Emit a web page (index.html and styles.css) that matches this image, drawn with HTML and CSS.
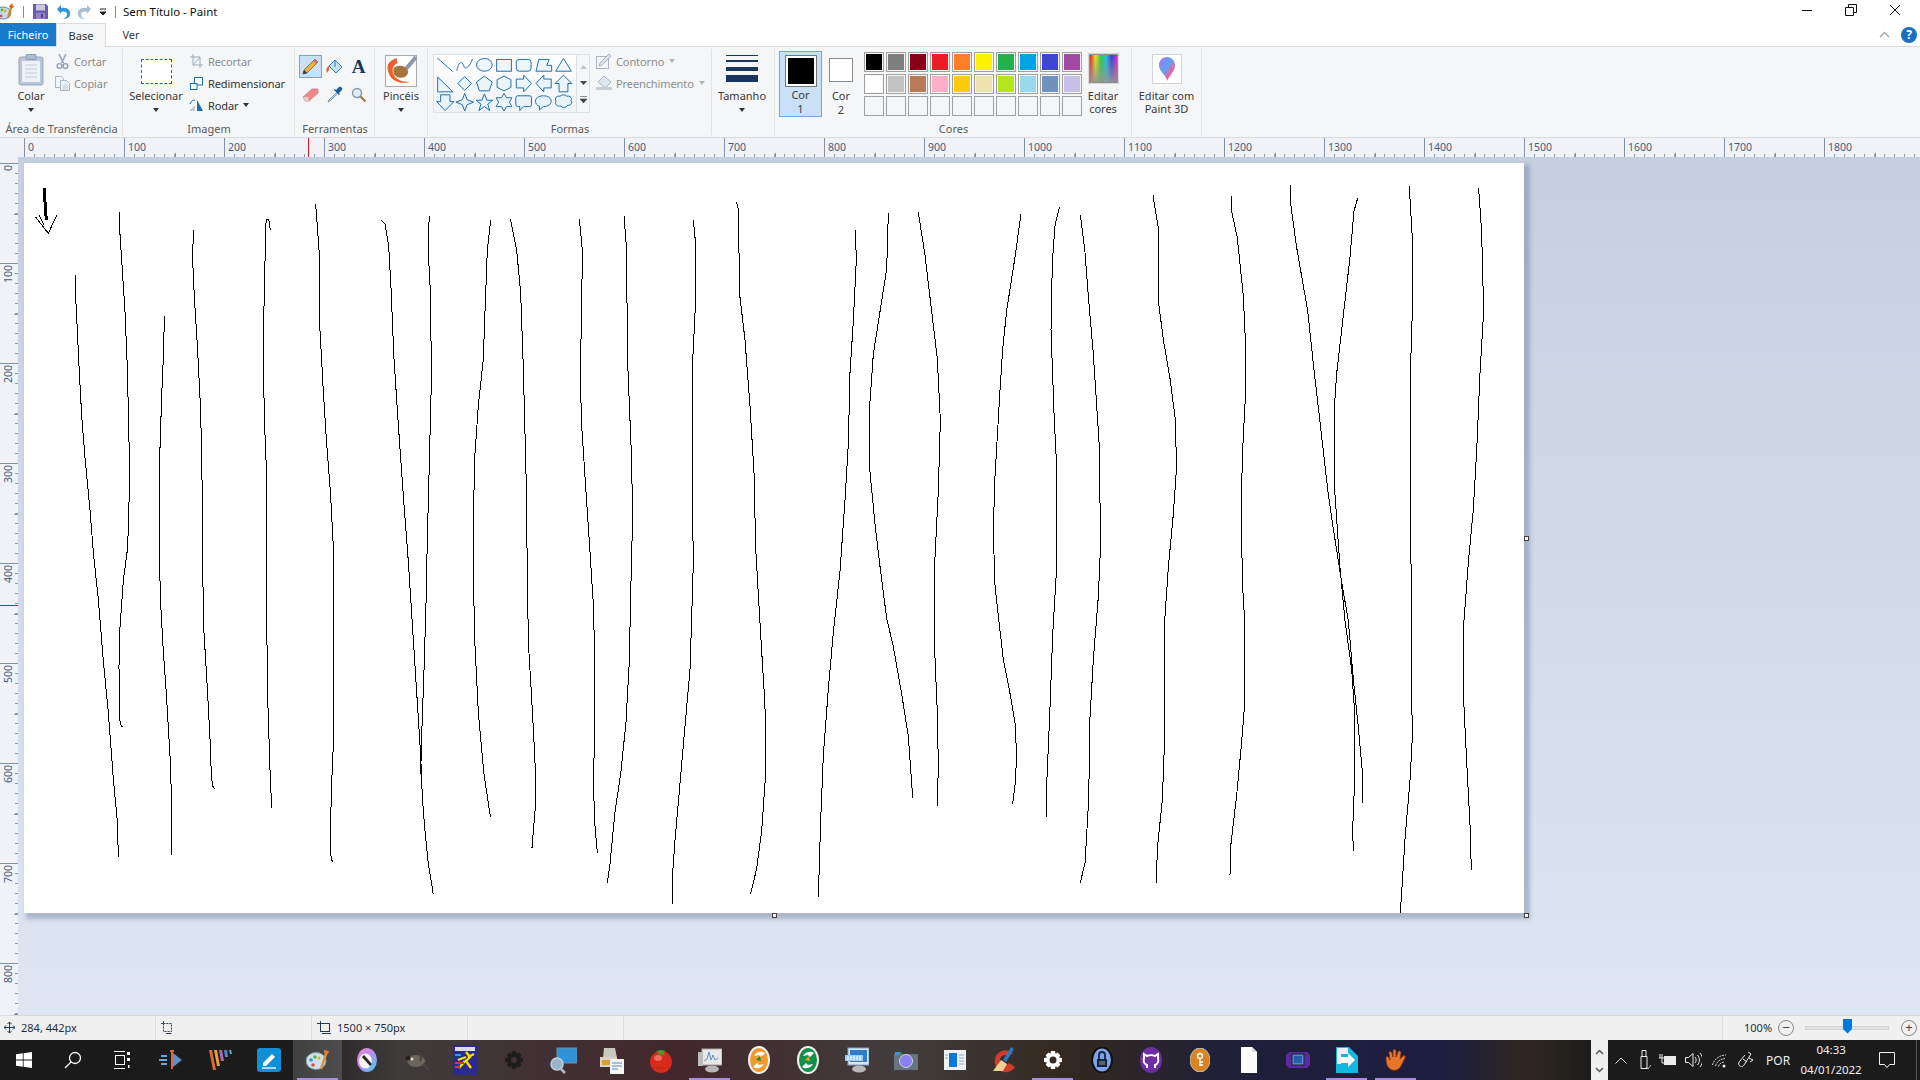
FILE: index.html
```html
<!DOCTYPE html>
<html lang="pt">
<head>
<meta charset="utf-8">
<title>Sem Título - Paint</title>
<link rel="stylesheet" href="styles.css">
</head>
<body>
<div class="app">
  <header class="titlebar">
    <div class="qat">
      <svg class="qat-app" width="18" height="18" viewBox="0 0 18 18"><ellipse cx="6" cy="10" rx="8" ry="6" fill="#c9dce8" stroke="#6d8796"/><circle cx="2" cy="9" r="1.4" fill="#3c8fd0"/><circle cx="5" cy="7" r="1.4" fill="#5cae4c"/><circle cx="8" cy="8" r="1.4" fill="#d8b030"/><circle cx="4" cy="13" r="1.4" fill="#d05040"/><path d="M15 1 L11 15" stroke="#d08a30" stroke-width="2.4"/><path d="M13 2l4 1-1 2-4-1z" fill="#e05a30"/></svg>
      <span class="qat-sep"></span>
      <svg class="qat-save" width="15" height="15" viewBox="0 0 15 15"><path d="M0 0h13l2 2v13H0z" fill="#6a5bb0"/><rect x="3" y="0.5" width="9" height="6" fill="#c9c8e0"/><rect x="3" y="9" width="9" height="6" fill="#8e88c4"/><rect x="8" y="10" width="2" height="4" fill="#4a3f90"/></svg>
      <svg class="qat-undo" width="15" height="16" viewBox="0 0 15 16"><path d="M1 5 L5 1 L5 4 C12 3 15 7 14 11 C13 14 10 15 7 15 C10 14 11 12 11 10 C11 8 8 7 5 8 L5 10 Z" fill="#2f96dc"/></svg>
      <svg class="qat-redo" width="15" height="16" viewBox="0 0 15 16"><path d="M14 5 L10 1 L10 4 C3 3 0 7 1 11 C2 14 5 15 8 15 C5 14 4 12 4 10 C4 8 7 7 10 8 L10 10 Z" fill="#a9c0d2"/></svg>
      <svg class="qat-more" width="8" height="8" viewBox="0 0 8 8"><path d="M1 1h6M1 4h6l-3 3z" stroke="#222" fill="#222"/></svg>
      <span class="qat-sep qat-sep-end"></span>
      <span class="doc-title">Sem Título - Paint</span>
    </div>
    <div class="winctl">
      <svg width="12" height="12" viewBox="0 0 12 12"><path d="M1 6.5h10" stroke="#111"/></svg>
      <svg width="12" height="12" viewBox="0 0 12 12"><path d="M3.5 3V.5h8v8H9M.5 3.5h8v8h-8z" fill="none" stroke="#111"/></svg>
      <svg width="12" height="12" viewBox="0 0 12 12"><path d="M1 1l10 10M11 1L1 11" stroke="#111"/></svg>
    </div>
  </header>

  <nav class="tabs">
    <span class="tab tab-file">Ficheiro</span>
    <span class="tab tab-active">Base</span>
    <span class="tab">Ver</span>
    <span class="tabs-fill"></span>
    <svg class="tabs-chev" width="11" height="7" viewBox="0 0 11 7"><path d="M1 6l4.5-4.5L10 6" fill="none" stroke="#a8a8a8" stroke-width="1.4"/></svg>
    <span class="help">?</span>
  </nav>

  <section class="ribbon">
    <div class="group g-clip">
      <div class="group-body">
        <div class="big big-colar">
          <div class="big-icon">
            <svg width="26" height="32" viewBox="0 0 26 32"><rect x="1" y="3" width="24" height="28" rx="2" fill="#b9c6da" stroke="#97a7bf"/><rect x="4" y="7" width="18" height="21" fill="#eef2f8"/><path d="M7 11h12M7 15h12M7 19h12M7 23h12" stroke="#c5cedc"/><rect x="8" y="0.5" width="10" height="5" rx="1" fill="#aebbd0" stroke="#8d9db8"/></svg>
          </div>
          <span class="big-text">Colar</span>
          <span class="caret"></span>
        </div>
        <div class="small-col">
          <div class="small off"><svg width="13" height="15" viewBox="0 0 13 15"><path d="M3 0l4.500 9M10 0L5.500 9" stroke="#9aa7b8" stroke-width="1.600" fill="none"/><circle cx="3.500" cy="12" r="2.400" fill="none" stroke="#8f9db0" stroke-width="1.400"/><circle cx="9.500" cy="12" r="2.400" fill="none" stroke="#8f9db0" stroke-width="1.400"/></svg><span>Cortar</span></div>
          <div class="small off"><svg width="15" height="15" viewBox="0 0 15 15"><path d="M.5.5h6l2 2v9h-8z" fill="#f2f5f9" stroke="#a9b4c4"/><path d="M5.500 4.500h6l3 3v7h-9z" fill="#f2f5f9" stroke="#a9b4c4"/><path d="M7 9h6M7 11h6M7 13h6" stroke="#c3ccd8"/></svg><span>Copiar</span></div>
        </div>
      </div>
      <div class="group-label">Área de Transferência</div>
    </div>

    <div class="group g-image">
      <div class="group-body">
        <div class="big big-select">
          <div class="big-icon"><span class="marquee"></span></div>
          <span class="big-text">Selecionar</span>
          <span class="caret"></span>
        </div>
        <div class="small-col">
          <div class="small off"><svg width="13" height="14" viewBox="0 0 13 14"><path d="M3 0v11h10M0 3h10v11" fill="none" stroke="#9aa8bc"/><path d="M3 11L10 3" stroke="#9aa8bc"/></svg><span>Recortar</span></div>
          <div class="small"><svg width="13" height="13" viewBox="0 0 13 13"><rect x="4.500" y=".5" width="8" height="7.500" fill="#fff" stroke="#1e6eb4"/><rect x=".5" y="6.500" width="6.500" height="6" fill="#fff" stroke="#1e6eb4"/></svg><span>Redimensionar</span></div>
          <div class="small"><svg width="15" height="13" viewBox="0 0 15 13"><path d="M8 12V1l6 11z" fill="#1e6eb4"/><path d="M6 12H0l6-6z" fill="#c4ccd6"/><path d="M1 5C2 2 4 1 6 1" fill="none" stroke="#1e6eb4"/></svg><span>Rodar</span><span class="caret caret-inline"></span></div>
        </div>
      </div>
      <div class="group-label">Imagem</div>
    </div>

    <div class="group g-tools">
      <div class="group-body">
        <div class="tools">
          <span class="tool tool-on"><svg width="17" height="17" viewBox="0 0 17 17"><path d="M13 1l3 3L5 15l-4 1 1-4z" fill="#e9b43c" stroke="#75613a" stroke-width=".8"/><path d="M13 1l3 3-2 2-3-3z" fill="#d9746a"/><path d="M1 16l1-4 3 3z" fill="#333"/></svg></span>
          <span class="tool"><svg width="18" height="18" viewBox="0 0 18 18"><path d="M9 2l7 7-6 6-7-7z" fill="#c9dff0" stroke="#2d78b8"/><path d="M9 2v7" stroke="#2d78b8"/><path d="M3 8C0 9 0 13 1 15L3 12z" fill="#e8632a"/></svg></span>
          <span class="tool tool-a">A</span>
          <span class="tool"><svg width="17" height="14" viewBox="0 0 17 14"><path d="M1 9l9-8h6v4l-9 8H3z" fill="#ee8a8e" stroke="#cf6e72" stroke-width=".7"/><path d="M1 9l5 0 1 4H3z" fill="#d9d0d0"/></svg></span>
          <span class="tool"><svg width="16" height="17" viewBox="0 0 16 17"><path d="M10 6l-8 8-1 2 2-1 8-8z" fill="#cfe1f0" stroke="#5b7f9f" stroke-width=".8"/><path d="M9 4l3-3c2-1 4 1 3 3l-3 3 1 1-1 1-5-5 1-1z" fill="#1e5ea5"/></svg></span>
          <span class="tool"><svg width="16" height="16" viewBox="0 0 16 16"><circle cx="6" cy="6" r="4.500" fill="#dcecf7" stroke="#8a96a5" stroke-width="1.400"/><path d="M9.500 9.500l5 5" stroke="#a07b4a" stroke-width="2.200"/></svg></span>
        </div>
      </div>
      <div class="group-label">Ferramentas</div>
    </div>

    <div class="group g-brush">
      <div class="group-body">
        <div class="big big-brush">
          <div class="big-icon big-icon-top">
            <svg class="brush-svg" width="32" height="32" viewBox="0 0 32 32"><rect x=".5" y=".5" width="31" height="31" fill="#fff" stroke="#a9a9a9"/><path d="M31 2L20 15" stroke="#8d99a8" stroke-width="4"/><path d="M10 12c6-3 13 0 13 5s-7 7-11 5-5-8-2-10z" fill="#a8743e"/><path d="M12 3C5 5 1 9 3 16c2 9 11 14 22 11-9 0-15-3-17-9-1-4 0-8 5-10 0 0-2-3-1-5z" fill="#e8632a"/></svg>
          </div>
          <span class="big-text">Pincéis</span>
          <span class="caret"></span>
        </div>
      </div>
      <div class="group-label">&nbsp;</div>
    </div>

    <div class="group g-shapes">
      <div class="group-body">
        <div class="gallery">
          <svg class="gallery-svg" width="142" height="58" viewBox="0 0 142 58">
            <g class="shape-stroke">
              <path class="no-fill" d="M2 3L18 17"/>
              <path class="no-fill" d="M22 16C24 5 28 7 29 11S34 14 38 4"/>
              <ellipse cx="50" cy="10" rx="8" ry="6.500"/>
              <rect x="62.500" y="4.500" width="15" height="12"/>
              <rect x="82.500" y="4.500" width="15" height="12" rx="3"/>
              <path d="M102.500 16.500L105.500 4.500H116L113.500 10.500H118.500V16.500Z"/>
              <path d="M130.500 3.500L122.500 16.500H138.500Z"/>
              <path d="M2.500 22.500V37.500H18Z"/>
              <path d="M30 22L37 29 30 36 23 29Z"/>
              <path d="M50 21.500L58 27.500 55 36.500H45L42 27.500Z"/>
              <path d="M70 21.500L77 25V33L70 36.500 63 33V25Z"/>
              <path d="M82.500 24.500H90V20.500L98 29 90 37.500V33.500H82.500Z"/>
              <path d="M118 24.500H110.500V20.500L102.500 29 110.500 37.500V33.500H118Z"/>
              <path d="M130.500 20.500L139 29H135V37.500H126V29H122Z"/>
              <path d="M5.500 40.500H15V47.500H19L10 56.500 1.500 47.500H5.500Z"/>
              <path d="M30 39L32.500 45.500 39 48 32.500 50.500 30 57 27.500 50.500 21 48 27.500 45.500Z"/>
              <path d="M50 39.500L52.500 46H58.500L53.500 50 55.500 56.500 50 52.500 44.500 56.500 46.500 50 41.500 46H47.500Z"/>
              <path d="M70 39L72.500 43.500H78L75.500 48 78 52.500H72.500L70 57 67.500 52.500H62L64.500 48 62 43.500H67.500Z"/>
              <path d="M84 41.500H96Q98 41.500 98 43.500V50Q98 52.500 96 52.500H90L86 56.500V52.500H84Q82 52.500 82 50V43.500Q82 41.500 84 41.500Z"/>
              <path d="M110 41.500C115 41.500 118 44 118 47S115 52.500 110 52.500L106 56V52C103 51 102 49 102 47 102 44 105 41.500 110 41.500Z"/>
              <path d="M127 42C129 40 132 40 134 42 137 41 140 44 138 46 140 48 138 52 135 51 133 54 129 54 128 52 124 53 121 50 123 47 121 44 124 41 127 42Z"/>
            </g>
          </svg>
          <div class="gallery-scroll">
            <svg width="9" height="6" viewBox="0 0 9 6"><path d="M1 5l3.500-4L8 5z" fill="#c6c6c6"/></svg>
            <svg width="9" height="6" viewBox="0 0 9 6"><path d="M1 1l3.500 4L8 1z" fill="#444"/></svg>
            <svg width="9" height="8" viewBox="0 0 9 8"><path d="M1 .5h7M1 3l3.500 4L8 3z" fill="#444" stroke="#444" stroke-width=".6"/></svg>
          </div>
        </div>
        <div class="small-col small-col-shape">
          <div class="small off"><svg width="16" height="16" viewBox="0 0 16 16"><rect x=".5" y="3.500" width="12" height="12" fill="#f5f6f7" stroke="#a9b4c4"/><path d="M13 1l2 2-9 9-3 1 1-3z" fill="#dde3ea" stroke="#98a4b5" stroke-width=".8"/></svg><span>Contorno</span><span class="caret caret-inline caret-off"></span></div>
          <div class="small off"><svg width="16" height="16" viewBox="0 0 16 16"><path d="M8 1l7 6-6 6-7-6z" fill="#dfe6ee" stroke="#a9b4c4"/><rect y="12" width="16" height="3" fill="#c7ced8"/></svg><span>Preenchimento</span><span class="caret caret-inline caret-off"></span></div>
        </div>
      </div>
      <div class="group-label">Formas</div>
    </div>

    <div class="group g-size">
      <div class="group-body">
        <div class="big big-size">
          <div class="big-icon size-lines"><i class="sz1"></i><i class="sz2"></i><i class="sz3"></i><i class="sz4"></i></div>
          <span class="big-text">Tamanho</span>
          <span class="caret"></span>
        </div>
      </div>
      <div class="group-label">&nbsp;</div>
    </div>

    <div class="group g-colors">
      <div class="group-body">
        <div class="cor cor-on">
          <span class="cor-box"><i class="cor-black"></i></span>
          <span class="cor-text">Cor<br>1</span>
        </div>
        <div class="cor cor-two">
          <span class="cor-box2"></span>
          <span class="cor-text">Cor<br>2</span>
        </div>
        <div class="palette">
          <span class="sw"><i class="c1"></i></span><span class="sw"><i class="c2"></i></span><span class="sw"><i class="c3"></i></span><span class="sw"><i class="c4"></i></span><span class="sw"><i class="c5"></i></span><span class="sw"><i class="c6"></i></span><span class="sw"><i class="c7"></i></span><span class="sw"><i class="c8"></i></span><span class="sw"><i class="c9"></i></span><span class="sw"><i class="c10"></i></span>
          <span class="sw"><i class="c11"></i></span><span class="sw"><i class="c12"></i></span><span class="sw"><i class="c13"></i></span><span class="sw"><i class="c14"></i></span><span class="sw"><i class="c15"></i></span><span class="sw"><i class="c16"></i></span><span class="sw"><i class="c17"></i></span><span class="sw"><i class="c18"></i></span><span class="sw"><i class="c19"></i></span><span class="sw"><i class="c20"></i></span>
          <span class="sw"></span><span class="sw"></span><span class="sw"></span><span class="sw"></span><span class="sw"></span><span class="sw"></span><span class="sw"></span><span class="sw"></span><span class="sw"></span><span class="sw"></span>
        </div>
        <div class="big big-edit">
          <div class="big-icon big-icon-top"><span class="rainbow"></span></div>
          <span class="big-text">Editar<br>cores</span>
        </div>
      </div>
      <div class="group-label">Cores</div>
    </div>

    <div class="group g-3d">
      <div class="group-body">
        <div class="big big-3d">
          <div class="big-icon big-icon-top">
            <span class="p3d-box"><svg width="18" height="26" viewBox="0 0 18 26"><defs><linearGradient id="p3d" x1="0" y1="0" x2="1" y2="1"><stop offset="0" stop-color="#b86bf0"/><stop offset=".45" stop-color="#5aa6f5"/><stop offset=".7" stop-color="#f0609a"/><stop offset="1" stop-color="#f5b020"/></linearGradient></defs><path d="M9 1C14 1 17 5 17 9 17 15 12 19 9 25 9 20 1 16 1 9 1 5 4 1 9 1Z" fill="url(#p3d)"/></svg></span>
          </div>
          <span class="big-text">Editar com<br>Paint 3D</span>
        </div>
      </div>
      <div class="group-label">&nbsp;</div>
    </div>
  </section>

  <div class="ruler-top">
    <span class="rt">0</span><span class="rt">100</span><span class="rt">200</span><span class="rt">300</span><span class="rt">400</span><span class="rt">500</span><span class="rt">600</span><span class="rt">700</span><span class="rt">800</span><span class="rt">900</span><span class="rt">1000</span><span class="rt">1100</span><span class="rt">1200</span><span class="rt">1300</span><span class="rt">1400</span><span class="rt">1500</span><span class="rt">1600</span><span class="rt">1700</span><span class="rt">1800</span>
    <i class="mark-x"></i>
  </div>

  <main class="work-row">
    <div class="ruler-left">
      <span class="rl"><b>0</b></span><span class="rl"><b>100</b></span><span class="rl"><b>200</b></span><span class="rl"><b>300</b></span><span class="rl"><b>400</b></span><span class="rl"><b>500</b></span><span class="rl"><b>600</b></span><span class="rl"><b>700</b></span><span class="rl"><b>800</b></span>
      <i class="mark-y"></i>
    </div>
    <div class="workspace">
      <div class="canvas">
        <svg class="drawing" width="1500" height="750" viewBox="0 0 1500 750">
          <g class="ink">
            <polyline class="thick" points="20,25 22.300,57"/>
            <polyline points="11.300,53.700 24.300,70.300 32.700,52.300"/>
            <polyline points="15.300,52.300 20,62"/>
          </g>
          <g class="ink" transform="translate(16 7) scale(.33333 .47194)">
            <polyline points="107,222 107,270 112,340 118,430 125,520 135,610 150,720 160,810 175,910 190,1040 205,1150 220,1290 232,1380 235,1455"/>
            <polyline points="240,90 238,115 245,190 255,300 262,420 267,570 268,680 263,800 250,870 240,970 237,1050 238,1150 241,1175 247,1180"/>
            <polyline points="373,310 371,380 365,480 360,590 358,680 358,820 362,920 370,1020 380,1120 390,1240 394,1320 394,1452"/>
            <polyline points="460,127 458,190 463,270 472,370 482,510 486,650 488,850 492,980 503,1110 511,1220 514,1285 518,1305 524,1312"/>
            <polyline points="691,127 686,104 680,104 676,120 675,200 671,320 670,430 675,560 680,650 680,960 684,1140 690,1270 695,1352"/>
            <polyline points="827,72 830,100 838,180 840,340 850,470 860,580 872,690 880,800 881,1200 875,1300 871,1400 872,1450 877,1466"/>
            <polyline points="1024,106 1035,115 1046,160 1053,250 1062,400 1075,540 1090,690 1105,830 1125,1050 1142,1240 1147,1330 1155,1400 1165,1470 1180,1535"/>
            <polyline points="1170,97 1165,120 1166,190 1172,270 1174,450 1168,620 1162,780 1158,920 1152,1060 1146,1180 1142,1280"/>
            <polyline points="1352,107 1342,170 1335,300 1330,400 1315,500 1303,620 1300,800 1303,980 1315,1150 1332,1280 1351,1370"/>
            <polyline points="1411,103 1430,170 1442,260 1450,420 1458,640 1462,850 1465,1000 1475,1120 1485,1250 1486,1350 1476,1436"/>
          </g>
          <g class="ink" transform="translate(476 7) scale(.33333 .47194)">
            <polyline points="238,103 247,170 245,300 241,420 244,530 255,650 270,810 280,920 283,1000 283,1220 280,1300 285,1390 292,1447"/>
            <polyline points="372,97 380,170 382,390 390,530 394,600 398,730 392,900 388,1040 378,1170 362,1280 345,1360 330,1470 322,1510"/>
            <polyline points="580,107 586,150 586,290 577,420 577,690 580,830 575,950 570,1060 556,1170 540,1300 525,1420 517,1500 517,1555"/>
            <polyline points="709,67 714,80 720,270 735,360 750,500 762,640 767,800 780,960 792,1100 797,1170 796,1290 785,1400 770,1480 752,1534"/>
            <polyline points="1066,127 1069,190 1060,320 1050,430 1045,580 1035,700 1020,850 1000,980 985,1100 970,1240 962,1380 955,1540"/>
            <polyline points="1165,92 1160,210 1140,300 1120,390 1109,500 1110,640 1125,750 1140,840 1160,950 1180,1010 1205,1110 1225,1200 1238,1330"/>
            <polyline points="1255,90 1275,180 1290,270 1312,400 1321,530 1315,680 1305,820 1303,1000 1312,1150 1315,1260 1312,1347"/>
          </g>
          <g class="ink" transform="translate(976 7) scale(.33333 .48469)">
            <polyline points="63,90 45,180 20,290 8,370 0,455 -16,643 -20,750 -15,857 0,950 10,1010 30,1080 45,1140 50,1210 45,1270 38,1308"/>
            <polyline points="178,77 165,115 157,190 153,330 162,500 169,600 169,830 158,960 150,1110 140,1270 139,1335"/>
            <polyline points="241,92 255,170 265,260 280,380 297,560 302,770 295,880 280,1010 270,1130 266,1300 255,1430 241,1470"/>
            <polyline points="462,52 461,62 475,120 477,280 490,350 510,430 527,520 529,620 520,710 505,820 493,940 493,1190 487,1300 472,1400 469,1472"/>
            <polyline points="696,53 695,85 712,140 730,260 738,380 736,470 727,590 724,700 727,850 734,930 734,1100 725,1180 710,1290 693,1390 690,1454"/>
            <polyline points="872,30 871,65 890,160 923,290 940,400 965,550 985,670 1000,740 1025,850 1045,930 1060,1050 1075,1150 1087,1240 1088,1305"/>
            <polyline points="1073,58 1062,85 1050,180 1030,300 1010,420 1003,490 1005,670 1020,820 1035,930 1055,1030 1064,1120 1064,1260 1058,1360 1060,1405"/>
            <polyline points="1230,32 1230,60 1237,140 1237,290 1232,400 1232,580 1234,1030 1237,1170 1230,1260 1215,1380 1205,1490 1201,1533"/>
            <polyline points="1436,38 1445,130 1451,290 1440,420 1430,580 1420,700 1405,810 1392,930 1390,1080 1400,1220 1410,1350 1414,1444"/>
          </g>
        </svg>
        <i class="handle h-right"></i>
        <i class="handle h-bottom"></i>
        <i class="handle h-corner"></i>
      </div>
    </div>
  </main>

  <footer class="status">
    <div class="st st-pos">
      <svg width="11" height="11" viewBox="0 0 11 11"><path d="M5.500 0v11M0 5.500h11M5.500 0L3.500 2M5.500 0l2 2M5.500 11l-2-2M5.500 11l2-2M0 5.500l2-2M0 5.500l2 2M11 5.500l-2-2M11 5.500l-2 2" fill="none" stroke="#1f3a55"/></svg>
      <span>284, 442px</span>
    </div>
    <div class="st st-sel">
      <svg width="13" height="13" viewBox="0 0 13 13"><path d="M0 2.500h2M2.500 0v2M2.500 2.500h8v8h-8z" fill="none" stroke="#2a3f55" stroke-dasharray="2 1"/><path d="M10.500 12.500H5" stroke="#2a3f55"/></svg>
    </div>
    <div class="st st-size">
      <svg width="15" height="14" viewBox="0 0 15 14"><rect x="3.500" y="2.500" width="9" height="8" fill="none" stroke="#1f3a55"/><path d="M0 2.500h3M3.500 0v2M5 12.500h9" stroke="#1f3a55"/></svg>
      <span>1500 × 750px</span>
    </div>
    <div class="st st-empty"></div>
    <div class="st-fill"></div>
    <div class="st-zoom">
      <span class="zoom-pct">100%</span>
      <span class="zoom-btn">−</span>
      <span class="zoom-track"><i class="zoom-thumb"></i></span>
      <span class="zoom-btn">+</span>
    </div>
  </footer>

  <div class="taskbar">
    <div class="apps">
      <span class="tb tb-start"><svg width="16" height="16" viewBox="0 0 16 16"><path d="M0 2.300L6.800 1.300V7.600H0zM7.600 1.200L16 0V7.600H7.600zM0 8.400H6.800V14.700L0 13.700zM7.600 8.400H16V16L7.600 14.800z" fill="#fff"/></svg></span>
      <span class="tb"><svg width="18" height="18" viewBox="0 0 18 18"><circle cx="11" cy="7" r="5.500" fill="none" stroke="#fff" stroke-width="1.300"/><path d="M7 11l-6 6" stroke="#fff" stroke-width="1.300"/></svg></span>
      <span class="tb"><svg width="18" height="18" viewBox="0 0 18 18"><path d="M1 .5h11M1 17.500h11" stroke="#fff"/><rect x="2.500" y="4.500" width="9" height="9" fill="none" stroke="#fff"/><rect x="14" y="1" width="3" height="3" fill="#fff"/><rect x="14" y="7" width="3" height="3" fill="#fff"/><rect x="15" y="14" width="1.500" height="3" fill="#fff"/></svg></span>
      <span class="tb"><svg width="24" height="24" viewBox="0 0 24 24"><path d="M14 5l9 7-9 7z" fill="#5a8fc8"/><path d="M2 8h6M0 12h8M2 16h6" stroke="#6ea4dc" stroke-width="2"/><path d="M11 2h4v2h-1v17h-2V4h-1z" fill="#d8664c"/></svg></span>
      <span class="tb"><svg width="24" height="24" viewBox="0 0 24 24"><path d="M1 2h3l4 20H5z" fill="#d96a3a"/><path d="M6 2h3l3 16H9z" fill="#e8a23c"/><path d="M11 2h3l2 11h-3z" fill="#b06ab0"/><path d="M16 2h3l1 7h-3z" fill="#4a86c0"/><path d="M21 2h2l1 4h-2z" fill="#5ab0c8"/></svg></span>
      <span class="tb"><svg width="24" height="24" viewBox="0 0 24 24"><rect width="24" height="24" rx="3" fill="#0e8fd6"/><path d="M6 15l9-9 3 3-9 9H6z" fill="#fff"/><path d="M5 20h14" stroke="#fff" stroke-width="1.300"/></svg></span>
      <span class="tb tb-active tb-run"><svg width="24" height="24" viewBox="0 0 24 24"><ellipse cx="10" cy="13" rx="10" ry="8.500" fill="#cfe0ea" stroke="#7e96a6"/><circle cx="5" cy="12" r="1.800" fill="#3c8fd0"/><circle cx="9" cy="9" r="1.800" fill="#5cae4c"/><circle cx="13" cy="10" r="1.500" fill="#d8b030"/><circle cx="7" cy="17" r="1.800" fill="#d05040"/><path d="M21 3L15 21" stroke="#d9963a" stroke-width="2.400"/><path d="M18 2l5 1-1 3-4-1z" fill="#e07a3a"/></svg></span>
      <span class="tb"><svg width="20" height="24" viewBox="0 0 20 24"><defs><linearGradient id="kr" x1="0" y1="0" x2="1" y2="1"><stop offset="0" stop-color="#f48ad0"/><stop offset=".5" stop-color="#b48af0"/><stop offset="1" stop-color="#38dce8"/></linearGradient></defs><ellipse cx="10" cy="12" rx="10" ry="12" fill="url(#kr)"/><ellipse cx="8.500" cy="13" rx="6.500" ry="7.500" fill="#f6f6f6"/><path d="M6 8l8 9" stroke="#2a2a2a" stroke-width="2.800"/></svg></span>
      <span class="tb"><svg width="26" height="22" viewBox="0 0 26 22"><ellipse cx="13" cy="12" rx="9" ry="6" fill="#6a645a"/><circle cx="5" cy="9" r="2.500" fill="#222"/><path d="M15 3l4 7M19 6l-2 6M20 15l6 6" stroke="#4a463e" stroke-width="2"/><circle cx="9" cy="10" r="1.500" fill="#ddd"/></svg></span>
      <span class="tb"><svg width="24" height="30" viewBox="0 0 24 30"><rect width="24" height="30" rx="1" fill="#2c2a8c"/><rect x="2" y="2" width="20" height="4" fill="#ddd"/><path d="M13 7l4 5-4 4 5 7M13 12l-8 3M15 12l6-3M12 16l-6 7" stroke="#f5e000" stroke-width="2.400" fill="none"/><path d="M2 18h9M2 22h5" stroke="#e03040" stroke-width="2"/><path d="M2 10h6" stroke="#20a0f0" stroke-width="2"/></svg></span>
      <span class="tb"><svg width="18" height="18" viewBox="0 0 18 18"><path d="M7 0h4l.5 2.800 2-1.300 2.800 2.800L15 6.500l3 .5v4l-3 .5 1.300 2.200-2.800 2.800-2-1.300L11 18H7l-.5-2.800-2 1.300-2.800-2.800L3 11.500 0 11V7l3-.5-1.300-2.200 2.800-2.800 2 1.300zM9 6a3 3 0 1 0 0 6 3 3 0 0 0 0-6z" fill="#1c1c1c" fill-rule="evenodd"/></svg></span>
      <span class="tb"><svg width="28" height="28" viewBox="0 0 28 28"><rect x="8" y="2" width="20" height="15" fill="#2f92d8" stroke="#6e8ea8"/><circle cx="8" cy="18" r="6" fill="#9ab4c8" stroke="#c4d0da" stroke-width="1.500"/><path d="M12 23l4 4" stroke="#b0bcc6" stroke-width="2.500"/></svg></span>
      <span class="tb"><svg width="26" height="28" viewBox="0 0 26 28"><path d="M5 2h11l2 10H4z" fill="#c8c8c0"/><rect x="1" y="11" width="17" height="10" fill="#d8d4c4"/><rect x="3" y="14" width="8" height="5" fill="#d8a030"/><rect x="11" y="13" width="14" height="15" fill="#f5f5f5"/><path d="M13 17h10M13 20h10M13 23h6" stroke="#5a8ab0"/></svg></span>
      <span class="tb"><svg width="24" height="26" viewBox="0 0 24 26"><circle cx="12" cy="15" r="11" fill="#d62a1a"/><ellipse cx="9" cy="11" rx="4" ry="3" fill="#ee6a5a"/><path d="M12 3l-5 1 3 2-2 3 4-2 4 2-2-3 3-2-5-1z" fill="#4e9a2c"/><path d="M4 21h16" stroke="#8e1a10" stroke-dasharray="1 2"/></svg></span>
      <span class="tb tb-run"><svg width="24" height="26" viewBox="0 0 24 26"><rect x="4" y="2" width="20" height="16" fill="#e8e8e8" stroke="#aaa"/><path d="M6 14l3-2 2-7 2 8 2-5 2 5 3-2" fill="none" stroke="#5a90c8"/><rect x="0" y="5" width="5" height="14" fill="#bcbcbc"/><ellipse cx="14" cy="22" rx="7" ry="3.500" fill="#b8b8b8"/></svg></span>
      <span class="tb"><svg width="22" height="28" viewBox="0 0 22 28"><ellipse cx="11" cy="14" rx="11" ry="14" fill="#f0f0f0"/><ellipse cx="11" cy="14" rx="9" ry="12" fill="#ef9a2a"/><path d="M6 10c3-5 8-5 11-3l-4 4-2-2M16 18c-3 5-8 5-11 3l4-4 2 2" fill="#fff"/><path d="M8 14l4-4 1 5z" fill="#2f8a4a"/></svg></span>
      <span class="tb"><svg width="22" height="28" viewBox="0 0 22 28"><ellipse cx="11" cy="14" rx="11" ry="14" fill="#f0f0f0"/><ellipse cx="11" cy="14" rx="9" ry="12" fill="#129048"/><path d="M6 10c3-5 8-5 11-3l-4 4-2-2M16 18c-3 5-8 5-11 3l4-4 2 2" fill="#fff"/><path d="M8 14l4-4 1 5z" fill="#ef9a2a"/></svg></span>
      <span class="tb"><svg width="24" height="26" viewBox="0 0 24 26"><rect x="3" y="1" width="21" height="17" fill="#d8e4f0" stroke="#8aa4c0"/><rect x="5" y="3" width="17" height="12" fill="#2e7ec8"/><path d="M0 8h18v6H0z" fill="#a8c8e8"/><path d="M2 10h14M2 12h14" stroke="#fff" stroke-dasharray="2 1"/><ellipse cx="14" cy="22" rx="7" ry="3.500" fill="#b8b8b8"/></svg></span>
      <span class="tb"><svg width="24" height="20" viewBox="0 0 24 20"><path d="M0 4h2l1-2h4l1 2h16v16H0z" fill="#68747e"/><path d="M1 2h5v3H1z" fill="#2e9ae0"/><circle cx="12" cy="11" r="6.500" fill="#8a80f0"/><circle cx="12" cy="11" r="6.500" fill="none" stroke="#d0d4d8"/></svg></span>
      <span class="tb"><svg width="22" height="20" viewBox="0 0 22 20"><rect width="22" height="20" fill="#eef2f6"/><rect x="5" y="3" width="8" height="14" fill="#0a78d8"/><path d="M15 5h5M15 8h5M15 11h5M15 14h5M1 5h3M1 8h3" stroke="#9aa4ae"/></svg></span>
      <span class="tb"><svg width="26" height="26" viewBox="0 0 26 26"><path d="M22 6A11 11 0 1 0 24 20L18 16A5 5 0 1 1 17 9Z" fill="#d03a2a"/><path d="M20 0l3 2-8 13-3-2z" fill="#2a78c8"/><path d="M10 13l6 4-4 7-10 0z" fill="#eed090"/></svg></span>
      <span class="tb tb-run"><svg width="18" height="18" viewBox="0 0 18 18"><path d="M7 0h4l.5 2.800 2-1.300 2.800 2.800L15 6.500l3 .5v4l-3 .5 1.300 2.200-2.800 2.800-2-1.300L11 18H7l-.5-2.800-2 1.300-2.800-2.800L3 11.500 0 11V7l3-.5-1.300-2.200 2.800-2.800 2 1.300zM9 5.500a3.500 3.500 0 1 0 0 7 3.500 3.500 0 0 0 0-7z" fill="#fff" fill-rule="evenodd"/></svg></span>
      <span class="tb"><svg width="22" height="26" viewBox="0 0 22 26"><ellipse cx="11" cy="13" rx="10" ry="12.500" fill="#7da4e8" stroke="#111" stroke-width="2"/><rect x="6" y="12" width="10" height="8" fill="#14243c"/><path d="M8 12V8c0-4 6-4 6 0v4" fill="none" stroke="#14243c" stroke-width="1.800"/><path d="M8 15h6M8 17h6" stroke="#8aa"/></svg></span>
      <span class="tb"><svg width="22" height="26" viewBox="0 0 22 26"><ellipse cx="11" cy="13" rx="11" ry="13" fill="#6e2da0"/><path d="M7 21v-3c-3-1-4-4-3-7l0-4 3 2c2-1 6-1 8 0l3-2 0 4c1 3 0 6-3 7v3" fill="none" stroke="#fff" stroke-width="2"/></svg></span>
      <span class="tb"><svg width="20" height="24" viewBox="0 0 20 24"><ellipse cx="10" cy="12" rx="10" ry="12" fill="#d98420" stroke="#bbb"/><circle cx="10" cy="8" r="2.500" fill="none" stroke="#fff" stroke-width="1.300"/><path d="M10 10v8M10 14h3M10 17h3" stroke="#fff" stroke-width="1.300"/></svg></span>
      <span class="tb"><svg width="16" height="26" viewBox="0 0 16 26"><path d="M0 0h11l5 5v21H0z" fill="#fbfbfb"/><path d="M11 0v5h5" fill="#d8d8d8"/></svg></span>
      <span class="tb"><svg width="24" height="20" viewBox="0 0 24 20"><path d="M3 2h18l3 3v10l-3 3H3l-3-3V5z" fill="#5c2aa0"/><rect x="6" y="4" width="12" height="11" fill="#4a8ae0" stroke="#222"/><rect x="8" y="6" width="8" height="7" fill="#2a5ca8"/></svg></span>
      <span class="tb tb-run"><svg width="22" height="26" viewBox="0 0 22 26"><path d="M0 0h13l9 9v17H0z" fill="#12b8e0"/><path d="M1 1h11v6H5v10H1z" fill="#eef"/><path d="M5 10h7V6l7 7-7 7v-4H5z" fill="#fff"/></svg></span>
      <span class="tb tb-run"><svg width="24" height="24" viewBox="0 0 24 24"><path d="M2 10c0-2 2-2 3 0l1 2-1-7c0-2 2-2 3 0l1 4 0-6c0-2 3-2 3 0l0 6 2-5c1-2 3-1 3 1l-1 6 3-3c1 -1 3 0 2 2l-4 8c-2 4-6 5-9 4-5-2-6-7-6-12z" fill="#e8762a" stroke="#7a3410" stroke-width=".8"/></svg></span>
    </div>
    <div class="tb-fill"></div>
    <div class="tb-scroll">
      <svg width="9" height="6" viewBox="0 0 9 6"><path d="M1 5l3.500-3.500L8 5" fill="none" stroke="#555" stroke-width="1.500"/></svg>
      <svg width="9" height="6" viewBox="0 0 9 6"><path d="M1 1l3.500 3.500L8 1" fill="none" stroke="#555" stroke-width="1.500"/></svg>
    </div>
    <div class="tray">
      <svg class="tr-chev" width="12" height="7" viewBox="0 0 12 7"><path d="M.5 6.500L6 1l5.500 5.500" fill="none" stroke="#e8e8e8"/></svg>
      <svg class="tr-usb" width="12" height="20" viewBox="0 0 12 20"><path d="M2 6.500h6v12H2zM3 .5h4v6H3z" fill="none" stroke="#ececec"/><path d="M7 17l2 2 3-4" fill="none" stroke="#bbb"/></svg>
      <svg class="tr-pow" width="18" height="14" viewBox="0 0 18 14"><rect x="5.500" y="3.500" width="11" height="8" fill="#ececec" stroke="#ececec"/><path d="M0 5h5M3 1v4M1 1v4" stroke="#ececec"/><path d="M3 5v5h3" fill="none" stroke="#ececec"/></svg>
      <svg class="tr-vol" width="17" height="16" viewBox="0 0 17 16"><path d="M.5 5.500h3L8 1.500v13l-4.500-4h-3z" fill="none" stroke="#ececec"/><path d="M10 5c1.500 2 1.500 4 0 6M12.500 3c2.500 3 2.500 7 0 10M15 1c3.500 4 3.500 10 0 14" fill="none" stroke="#ececec"/></svg>
      <svg class="tr-wifi" width="15" height="15" viewBox="0 0 15 15"><path d="M.5 12C2 6 8 2 14 2M3.500 13C4.500 9 8 6 13 5.500M6.500 13.500C7 11 9 9.500 12 9" fill="none" stroke="#cfcfcf" stroke-dasharray="2 .8"/><circle cx="12" cy="13" r="1.500" fill="#ececec"/></svg>
      <svg class="tr-pen" width="17" height="19" viewBox="0 0 17 19"><path d="M11 1l3 2-7 11c-1 2-4 2-5 0-1-1 0-3 1-4l5-6M6 8l4 3" fill="none" stroke="#ececec"/><path d="M12 7l4 2-3 2" fill="none" stroke="#ececec"/></svg>
      <span class="tr-lang">POR</span>
      <span class="tr-clock"><span>04:33</span><span>04/01/2022</span></span>
      <svg class="tr-note" width="16" height="16" viewBox="0 0 16 16"><path d="M.5.5h15v12h-5l-2.500 3-2.500-3h-5z" fill="none" stroke="#f0f0f0"/></svg>
      <i class="tr-show"></i>
    </div>
  </div>
</div>
</body>
</html>
```
FILE: styles.css
```css
* { box-sizing: border-box; }
html, body { margin: 0; padding: 0; height: 100%; }
body { font-family: "Noto Sans", "Open Sans", sans-serif; font-size: 12px; color: #3a3a3a; overflow: hidden; }
i { display: block; font-style: normal; }
svg { display: block; flex: none; }

.app { display: flex; flex-direction: column; height: 1080px; width: 1920px; background: #fff; }

/* title bar */
.titlebar { height: 23px; display: flex; align-items: center; background: #fff; flex: none; }
.qat { display: flex; align-items: center; flex: 1; position: relative; height: 100%; }
.qat-app { margin-left: -3px; }
.qat-sep { width: 1px; height: 12px; background: #8a8a8a; margin-left: 8px; }
.qat-save { margin-left: 9px; }
.qat-undo { margin-left: 8px; }
.qat-redo { margin-left: 6px; }
.qat-more { margin-left: 7px; }
.qat-sep-end { margin-left: 8px; }
.doc-title { margin-left: 7px; color: #111; font-size: 11.500px; }
.winctl { display: flex; gap: 32px; padding-right: 19px; height: 100%; align-items: center; margin-top: -3px; }

/* tabs */
.tabs { height: 24px; display: flex; align-items: stretch; flex: none; background: #fff; border-bottom: 1px solid #dadbdc; }
.tab { display: flex; align-items: center; justify-content: center; width: 50px; color: #333; font-size: 11px; }
.tab-file { width: 56px; background: #1979ca; color: #fff; }
.tab-active { background: #f5f6f7; border: 1px solid #dadbdc; border-bottom: 0; height: 24px; }
.tabs-fill { flex: 1; }
.tabs-chev { align-self: center; margin-right: 11px; }
.help { align-self: center; width: 16px; height: 16px; border-radius: 50%; background: #1b6fc1; color: #fff; font-weight: 700; font-size: 12px; line-height: 16px; text-align: center; margin-right: 3px; }

/* ribbon */
.ribbon { height: 91px; display: flex; flex: none; background: #f5f6f7; border-bottom: 1px solid #dadbdc; }
.group { display: flex; flex-direction: column; position: relative; }
.group::after { content: ""; position: absolute; right: 0; top: 2px; bottom: 2px; width: 1px; background: #e2e3e4; }
.group-body { height: 72px; display: flex; padding-top: 4px; flex: none; }
.group-label { height: 18px; line-height: 19px; text-align: center; color: #5a5a5a; font-size: 11px; white-space: nowrap; }
.g-clip { width: 123px; }
.g-image { width: 172px; }
.g-tools { width: 80px; }
.g-brush { width: 53px; }
.g-shapes { width: 284px; }
.g-size { width: 63px; }
.g-colors { width: 357px; }
.g-3d { width: 70px; }

.big { display: flex; flex-direction: column; align-items: center; }
.big-icon { height: 38px; display: flex; align-items: center; justify-content: center; flex: none; }
.big-icon-top { align-items: flex-start; padding-top: 3px; }
.big-text { line-height: 13px; font-size: 11px; color: #3a3a3a; text-align: center; white-space: nowrap; }
.caret { width: 0; height: 0; border: 3.5px solid transparent; border-top: 4px solid #333; border-bottom: 0; margin-top: 6px; }
.caret-inline { margin: 0 0 0 5px; }
.caret-off { border-top-color: #b4b4b4; }

.big-colar { width: 62px; }
.g-image .big-select { margin-left: 1px; margin-right: 1px; width: 64px; }
.big-brush { width: 52px; }
.big-size { width: 60px; }
.big-edit { width: 42px; }
.big-3d { width: 69px; }

.small-col { display: flex; flex-direction: column; margin-top: -1px; }
.small { height: 22px; display: flex; align-items: center; white-space: nowrap; font-size: 11px; letter-spacing: -.1px; color: #333; }
.small svg { margin-right: 4px; width: 15px; }
.small.off { color: #8c8c8c; }
.g-clip .small-col { margin-left: -7px; }
.small-col-shape { margin-left: 6px; }
.small-col-shape .small svg { width: 16px; }

.marquee { display: block; width: 31px; height: 25px; border: 1px dashed #2065ad; background: #fff; margin-top: 2px; }

.tools { display: grid; grid-template-columns: repeat(3, 24px); grid-template-rows: repeat(2, 28px); margin: 4px 0 0 4px; }
.tool { display: flex; align-items: center; justify-content: center; width: 23px; height: 23px; }
.tool-on { background: #c9e0f7; border: 1px solid #6ea6e0; }
.tool-a { font-family: "Liberation Serif", serif; font-weight: 700; font-size: 19px; color: #16365f; }

.brush-svg { margin-top: 1px; }

.gallery { display: flex; margin: 3px 0 0 5px; height: 59px; width: 157px; border: 1px solid #dfe1e4; flex: none; }
.gallery-svg { background: linear-gradient(#ffffff, #eef4f8); width: 142px; height: 57px; }
.shape-stroke path, .shape-stroke rect, .shape-stroke ellipse { fill: rgba(225, 240, 250, .55); stroke: #1f6cab; stroke-width: 1; }
.shape-stroke .no-fill { fill: none; }
.gallery-scroll { flex: 1; border-left: 1px solid #dfe1e4; display: flex; flex-direction: column; align-items: center; justify-content: space-between; padding: 9px 0 8px; }

.size-lines { flex-direction: column; width: 32px; align-items: stretch; justify-content: flex-start; padding-top: 4px; }
.size-lines i { background: #1a365d; width: 32px; }
.sz1 { height: 1px; margin-bottom: 4px; }
.sz2 { height: 2px; margin-bottom: 5px; }
.sz3 { height: 4px; margin-bottom: 4px; }
.sz4 { height: 7px; }

.cor { width: 38px; height: 66px; display: flex; flex-direction: column; align-items: center; flex: none; }
.cor-on { width: 43px; background: #c9e0f7; border: 1px solid #6ea6e0; margin-left: 4px; }
.cor-box { display: block; width: 32px; height: 32px; border: 1px solid #757575; background: #fff; padding: 2px; margin-top: 3px; flex: none; }
.cor-black { width: 100%; height: 100%; background: #000; }
.cor-box2 { display: block; width: 24px; height: 24px; border: 1px solid #8a8a8a; background: #fff; margin: 7px 0 6px; flex: none; }
.cor-text { display: block; margin-top: 1px; line-height: 13.500px; font-size: 11px; text-align: center; color: #3a3a3a; }
.palette { display: grid; grid-template-columns: repeat(10, 20px); grid-template-rows: repeat(3, 20px); gap: 2px; margin: 1px 0 0 4px; flex: none; }
.sw { display: block; border: 1px solid #a0a0a0; background: #f5f6f7; padding: 1px; }
.sw i { width: 100%; height: 100%; }
.c1 { background: #000; } .c2 { background: #7f7f7f; } .c3 { background: #880015; } .c4 { background: #ed1c24; } .c5 { background: #ff7f27; } .c6 { background: #fff200; } .c7 { background: #22b14c; } .c8 { background: #00a2e8; } .c9 { background: #3f48cc; } .c10 { background: #a349a4; }
.c11 { background: #fff; } .c12 { background: #c3c3c3; } .c13 { background: #b97a57; } .c14 { background: #ffaec9; } .c15 { background: #ffc90e; } .c16 { background: #efe4b0; } .c17 { background: #b5e61d; } .c18 { background: #99d9ea; } .c19 { background: #7092be; } .c20 { background: #c8bfe7; }
.rainbow { display: block; width: 29px; height: 29px; border: 1px solid #8f8f8f; outline: 1px solid #d8d8d8; background: linear-gradient(rgba(255,255,255,0), rgba(150,150,150,.9)), linear-gradient(90deg, #e02020, #f0e020, #20d040, #20c0e0, #3040e0, #e020c0); }
.p3d-box { display: flex; align-items: center; justify-content: center; width: 30px; height: 30px; background: #fff; border: 1px solid #d4d4d4; }

/* rulers */
.ruler-top { height: 19px; flex: none; display: flex; padding-left: 24px; background: #f0f2f8; overflow: hidden; position: relative; }
.rt { flex: none; width: 100px; height: 19px; padding: 3px 0 0 3px; line-height: 13px; font-size: 10.500px; color: #465a7c;
  border-left: 1px solid #8492a8;
  background:
    linear-gradient(#8492a8, #8492a8) 50px 100% / 1px 4px no-repeat,
    repeating-linear-gradient(90deg, transparent 0 9px, #8f9bb0 9px 10px) 0 100% / 100% 3px no-repeat; }
.mark-x { position: absolute; left: 308px; top: 0; width: 1px; height: 19px; background: #e81123; }
.work-row { flex: 1; display: flex; min-height: 0; }
.ruler-left { width: 18px; flex: none; padding-top: 6px; background: #f0f2f8; overflow: hidden; position: relative; }
.rl { display: block; width: 18px; height: 100px; border-top: 1px solid #8492a8; padding: 1px 0 0 2px;
  background:
    linear-gradient(#8492a8, #8492a8) 100% 50px / 4px 1px no-repeat,
    repeating-linear-gradient(180deg, transparent 0 9px, #8f9bb0 9px 10px) 100% 0 / 3px 100% no-repeat; }
.rl b { display: block; font-weight: 400; writing-mode: vertical-rl; transform: rotate(180deg); font-size: 10.500px; line-height: 13px; color: #465a7c; }
.mark-y { position: absolute; left: 0; top: 448px; width: 18px; height: 1px; background: #e81123; }
.workspace { flex: 1; padding: 6px 0 0 6px; background: linear-gradient(#c5cfe0, #dde6f2); overflow: hidden; }
.canvas { width: 1500px; height: 750px; background: #fff; position: relative; box-shadow: 4px 4px 4px 2px rgba(110, 128, 160, .45); }
.drawing { display: block; }
.ink polyline { fill: none; stroke: #000; stroke-width: 1; vector-effect: non-scaling-stroke; shape-rendering: crispEdges; }
.ink .thick { stroke-width: 3; }
.handle { position: absolute; width: 5px; height: 5px; background: #fff; border: 1px solid #404040; }
.h-right { left: 1500px; top: 373px; }
.h-bottom { left: 748px; top: 750px; }
.h-corner { left: 1500px; top: 750px; }

/* status */
.status { height: 25px; flex: none; display: flex; align-items: center; background: #f0f0f0; border-top: 1px solid #d9d9d9; font-size: 11px; color: #1f2f40; }
.st { height: 100%; flex: none; display: flex; align-items: center; gap: 5px; border-right: 1px solid #dedede; padding: 0 0 1px 4px; }
.st-pos { width: 156px; gap: 6px; }
.st-sel { width: 156px; padding-left: 5px; }
.st-size { width: 156px; padding-left: 5px; }
.st-empty { width: 156px; }
.st-fill { flex: 1; }
.st-zoom { width: 198px; height: 100%; display: flex; align-items: center; border-left: 1px solid #dedede; padding: 0 0 1px 21px; }
.zoom-pct { width: 33px; }
.zoom-btn { width: 16px; height: 16px; border: 1px solid #888; border-radius: 50%; line-height: 13px; text-align: center; color: #444; font-size: 13px; flex: none; margin-left: 1px; }
.zoom-track { display: block; width: 84px; height: 4px; margin: 0 11px; background: #e1e1e1; border: 1px solid #d4d4d4; position: relative; flex: none; }
.zoom-thumb { position: absolute; left: 37px; top: -8px; width: 9px; height: 15px; background: #0078d7; clip-path: polygon(0 0, 100% 0, 100% 70%, 50% 100%, 0 70%); }

/* taskbar */
.taskbar { height: 40px; flex: none; display: flex; align-items: stretch; color: #fff;
  background: linear-gradient(90deg, #1a1a1a 0, #1c1c1c 290px, #3f3b3b 400px, #42272c 680px, #423d3d 900px, #33291f 1060px, #1f1f3a 1240px, #1d1d40 1440px, #2f281f 1530px, #1c1c1c 1590px); }
.apps { display: flex; flex: none; }
.tb { width: 49px; display: flex; align-items: center; justify-content: center; position: relative; }
.tb-start { width: 48px; }
.tb-active { background: rgba(255, 255, 255, .16); }
.tb-run::after { content: ""; position: absolute; left: 4px; right: 4px; bottom: 0; height: 2px; background: #a98de0; }
.tb-fill { flex: 1; }
.tb-scroll { width: 17px; flex: none; background: #f0f0f0; display: flex; flex-direction: column; align-items: center; justify-content: space-between; padding: 9px 0 7px; }
.tray { width: 312px; flex: none; background: #1b1b1b; position: relative; display: flex; align-items: center; }
.tr-chev { margin-left: 7px; }
.tr-usb { margin-left: 12px; }
.tr-pow { margin-left: 8px; }
.tr-vol { margin-left: 8px; }
.tr-wifi { margin-left: 10px; }
.tr-pen { margin-left: 10px; }
.tr-lang { margin-left: 12px; font-size: 12px; color: #f0f0f0; }
.tr-clock { display: flex; flex-direction: column; align-items: center; width: 64px; margin-left: 9px; font-size: 11.500px; line-height: 20px; color: #f0f0f0; }
.tr-note { margin-left: 16px; }
.tr-show { position: absolute; right: 3px; top: 0; bottom: 0; width: 1px; background: #555; }
```
